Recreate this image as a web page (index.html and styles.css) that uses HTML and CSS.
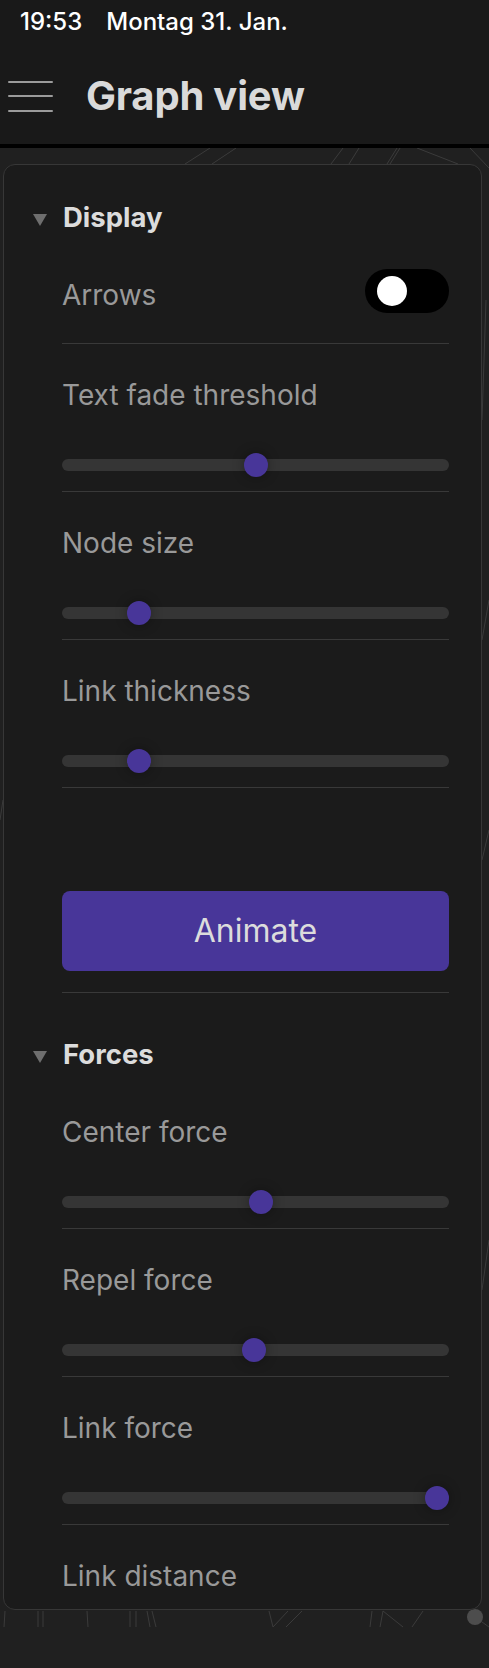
FILE: index.html
```html
<!DOCTYPE html>
<html lang="de">
<head>
<meta charset="utf-8">
<title>Graph view</title>
<link rel="stylesheet" href="styles.css">
</head>
<body>
<div class="screen">
  <header class="topbar">
    <div class="status"><span class="time">19:53</span><span class="date">Montag 31. Jan.</span></div>
    <div class="titlebar">
      <div class="menu"><span></span><span></span><span></span></div>
      <h1 class="title">Graph view</h1>
    </div>
  </header>
  <main class="graph">
    <svg class="canvas" width="489" height="1480" viewBox="0 148 489 1480">
      <g class="edges">
        <line x1="185" y1="164" x2="210" y2="148"/>
        <line x1="212" y1="164" x2="236" y2="148"/>
        <line x1="331" y1="164" x2="343" y2="148"/>
        <line x1="349" y1="164" x2="359" y2="148"/>
        <line x1="387" y1="164" x2="397" y2="148"/>
        <line x1="390" y1="164" x2="400" y2="148"/>
        <line x1="417" y1="148" x2="458" y2="164"/>
        <line x1="470" y1="148" x2="489" y2="168"/>
        <line x1="486" y1="300" x2="482" y2="420"/>
        <line x1="482" y1="640" x2="489" y2="600"/>
        <line x1="482" y1="860" x2="489" y2="830"/>
        <line x1="482" y1="1290" x2="489" y2="1240"/>
        <line x1="0" y1="820" x2="3" y2="800"/>
        <line x1="5" y1="1611" x2="4" y2="1627"/>
        <line x1="38" y1="1611" x2="38" y2="1627"/>
        <line x1="43" y1="1611" x2="43" y2="1627"/>
        <line x1="87" y1="1611" x2="88" y2="1627"/>
        <line x1="130" y1="1611" x2="130" y2="1627"/>
        <line x1="136" y1="1611" x2="136" y2="1627"/>
        <line x1="147" y1="1611" x2="150" y2="1627"/>
        <line x1="152" y1="1611" x2="156" y2="1627"/>
        <line x1="269" y1="1611" x2="273" y2="1627"/>
        <line x1="273" y1="1627" x2="288" y2="1611"/>
        <line x1="302" y1="1611" x2="286" y2="1627"/>
        <line x1="372" y1="1611" x2="370" y2="1627"/>
        <line x1="383" y1="1611" x2="380" y2="1627"/>
        <line x1="383" y1="1611" x2="403" y2="1627"/>
        <line x1="423" y1="1611" x2="412" y2="1627"/>
        <line x1="475" y1="1617" x2="489" y2="1627"/>
      </g>
      <circle class="node" cx="475" cy="1617" r="8"/>
    </svg>
    <section class="panel">
      <div class="section-head first"><span class="caret"></span><span>Display</span></div>

      <div class="item toggle-item">
        <span class="label">Arrows</span>
        <div class="toggle"><span class="knob"></span></div>
      </div>

      <div class="item slider-item">
        <div class="label">Text fade threshold</div>
        <div class="slider"><div class="track"></div><div class="thumb" style="--v:0.5"></div></div>
      </div>

      <div class="item slider-item">
        <div class="label">Node size</div>
        <div class="slider"><div class="track"></div><div class="thumb" style="--v:0.18"></div></div>
      </div>

      <div class="item slider-item">
        <div class="label">Link thickness</div>
        <div class="slider"><div class="track"></div><div class="thumb" style="--v:0.18"></div></div>
      </div>

      <div class="item button-item">
        <button class="animate" type="button">Animate</button>
      </div>

      <div class="section-head"><span class="caret"></span><span>Forces</span></div>

      <div class="item slider-item">
        <div class="label">Center force</div>
        <div class="slider"><div class="track"></div><div class="thumb" style="--v:0.515"></div></div>
      </div>

      <div class="item slider-item">
        <div class="label">Repel force</div>
        <div class="slider"><div class="track"></div><div class="thumb" style="--v:0.496"></div></div>
      </div>

      <div class="item slider-item">
        <div class="label">Link force</div>
        <div class="slider"><div class="track"></div><div class="thumb" style="--v:1"></div></div>
      </div>

      <div class="item slider-item">
        <div class="label">Link distance</div>
        <div class="slider"><div class="track"></div><div class="thumb" style="--v:0.5"></div></div>
      </div>
    </section>
  </main>
</div>
</body>
</html>
```

FILE: styles.css
```css
* { box-sizing: border-box; }

html, body {
  margin: 0;
  padding: 0;
  background: #202020;
}

body {
  width: 489px;
  height: 1668px;
  overflow: hidden;
  font-family: "Inter", "Noto Sans", "Liberation Sans", sans-serif;
  -webkit-font-smoothing: antialiased;
}

.screen {
  width: 489px;
}

/* ---------- top bar ---------- */
.topbar {
  background: #191919;
  height: 148px;
  border-bottom: 4px solid #000;
}

.status {
  height: 48px;
  padding: 8px 0 0 20px;
  display: flex;
  gap: 24px;
  font-size: 24px;
  line-height: 28px;
  font-weight: 500;
  color: #ffffff;
}

.titlebar {
  height: 96px;
  display: flex;
  align-items: center;
  padding-left: 8px;
  gap: 33px;
}

.menu {
  width: 45px;
  height: 31px;
  display: flex;
  flex-direction: column;
  justify-content: space-between;
}

.menu span {
  display: block;
  height: 2px;
  background: #9b9b9b;
  border-radius: 1px;
}

.title {
  margin: 0;
  font-size: 40px;
  line-height: 46px;
  font-weight: 700;
  color: #dadada;
  letter-spacing: -0.2px;
}

/* ---------- graph area ---------- */
.graph {
  position: relative;
  height: 1480px;
  padding: 16px 0 0 3px;
  overflow: hidden;
}

.canvas {
  position: absolute;
  left: 0;
  top: 0;
}

.edges line {
  stroke: #3b3b3b;
  stroke-width: 1;
}

.node {
  fill: #4d4d4d;
}

/* ---------- panel ---------- */
.panel {
  position: relative;
  width: 479px;
  height: 1446px;
  background: #1b1b1b;
  border: 1px solid #373737;
  border-radius: 12px;
  padding: 0 32px 0 29px;
  overflow: hidden;
}

.section-head {
  display: flex;
  align-items: center;
  gap: 16px;
  padding: 45px 0 11px 0;
  font-size: 27.5px;
  line-height: 32px;
  font-weight: 700;
  color: #dcdcdc;
}

.section-head.first {
  padding-top: 36px;
}

.caret {
  width: 0;
  height: 0;
  margin-top: 6px;
  border-left: 7.5px solid transparent;
  border-right: 7.5px solid transparent;
  border-top: 12px solid #6e6e6e;
}

.item {
  margin-left: 29px;
  border-bottom: 1px solid #393939;
}

.label {
  font-size: 28px;
  line-height: 32px;
  font-weight: 400;
  color: #999999;
}

/* toggle row */
.toggle-item {
  display: flex;
  align-items: center;
  justify-content: space-between;
  padding: 25px 0 30px 0;
}

.toggle-item .label {
  padding-top: 8px;
}

.toggle {
  position: relative;
  width: 84px;
  height: 44px;
  border-radius: 22px;
  background: #000000;
}

.knob {
  position: absolute;
  left: 12px;
  top: 7px;
  width: 30px;
  height: 30px;
  border-radius: 50%;
  background: #ffffff;
}

/* slider rows */
.slider-item {
  padding: 35px 0 14px 0;
}

.slider {
  position: relative;
  height: 24px;
  margin-top: 42px;
  display: flex;
  align-items: center;
}

.track {
  flex: 1;
  height: 12px;
  border-radius: 6px;
  background: #353535;
}

.thumb {
  position: absolute;
  top: 0;
  left: calc(var(--v) * (100% - 24px));
  width: 24px;
  height: 24px;
  border-radius: 50%;
  background: #483699;
  box-shadow: 0 0 12px rgba(0, 0, 0, 0.35);
}

/* button row */
.button-item {
  padding: 103px 0 21px 0;
}

.animate {
  display: block;
  width: 100%;
  height: 80px;
  border: none;
  border-radius: 8px;
  background: #483699;
  color: #dcdcdc;
  font-family: inherit;
  font-size: 32px;
  font-weight: 400;
  line-height: 40px;
  padding: 0;
}
```
